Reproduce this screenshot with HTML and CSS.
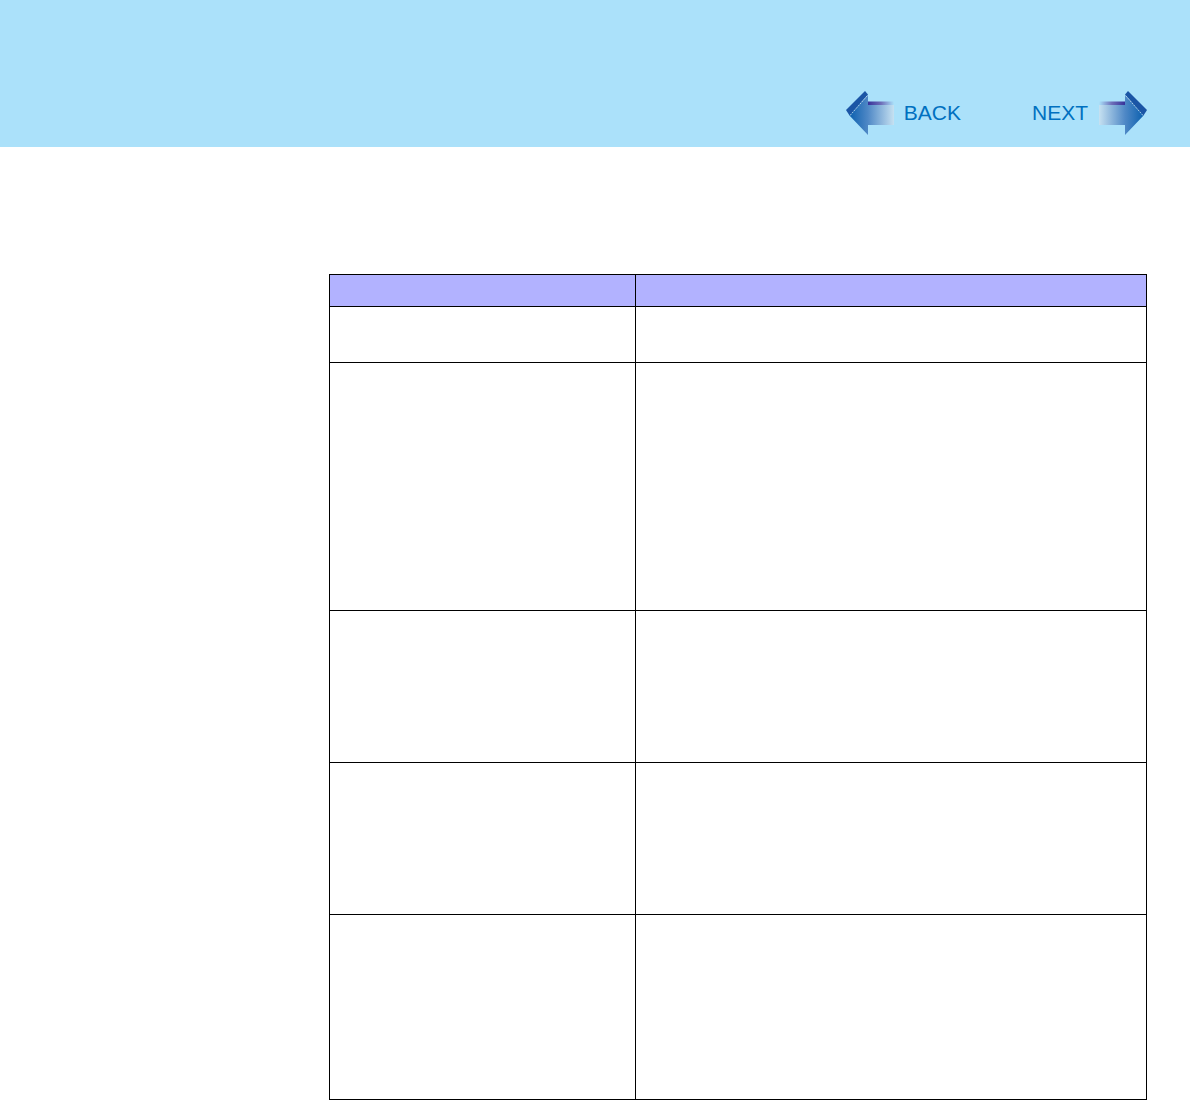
FILE: index.html
```html
<!DOCTYPE html>
<html lang="en">
<head>
<meta charset="utf-8">
<title>Manual page</title>
<link rel="stylesheet" href="styles.css">
</head>
<body>
<header class="banner">
  <nav class="pager">
    <a class="pager-link back" href="#">
      <svg class="arrow" width="50" height="46" viewBox="0 0 50 46">
        <defs>
          <linearGradient id="bk" gradientUnits="userSpaceOnUse" x1="4" x2="49" y1="0" y2="0">
            <stop offset="0" stop-color="#0a5fae"/>
            <stop offset="0.42" stop-color="#4f88c6"/>
            <stop offset="1" stop-color="#c6e1f1"/>
          </linearGradient>
          <linearGradient id="bks" x1="0" x2="1" y1="0" y2="0">
            <stop offset="0" stop-color="#37329a"/>
            <stop offset="0.5" stop-color="#6d6db8"/>
            <stop offset="1" stop-color="#abe1fa"/>
          </linearGradient>
        </defs>
        <path fill="url(#bk)" d="M4 25 L23 5 L23 15 L49 15 L49 35 L23 35 L23 45 Z"/>
        <rect fill="url(#bks)" x="23" y="11.5" width="26" height="3.5"/>
        <path fill="#1b55a5" d="M1 20 L20 1 L23 4.5 L4.5 25.5 Z"/>
        <path fill="none" stroke="#cfe6f2" stroke-width="0.8" stroke-dasharray="2 1" d="M5 25.5 L23 5"/>
      </svg>
      <span>BACK</span>
    </a>
    <a class="pager-link next" href="#">
      <span>NEXT</span>
      <svg class="arrow" width="50" height="46" viewBox="0 0 50 46">
        <defs>
          <linearGradient id="nx" gradientUnits="userSpaceOnUse" x1="46" x2="1" y1="0" y2="0">
            <stop offset="0" stop-color="#0a5fae"/>
            <stop offset="0.42" stop-color="#4f88c6"/>
            <stop offset="1" stop-color="#c6e1f1"/>
          </linearGradient>
          <linearGradient id="nxs" x1="1" x2="0" y1="0" y2="0">
            <stop offset="0" stop-color="#37329a"/>
            <stop offset="0.5" stop-color="#6d6db8"/>
            <stop offset="1" stop-color="#abe1fa"/>
          </linearGradient>
        </defs>
        <path fill="url(#nx)" d="M46 25 L27 5 L27 15 L1 15 L1 35 L27 35 L27 45 Z"/>
        <rect fill="url(#nxs)" x="1" y="11.5" width="26" height="3.5"/>
        <path fill="#1b55a5" d="M49 20 L30 1 L27 4.5 L45.5 25.5 Z"/>
        <path fill="none" stroke="#cfe6f2" stroke-width="0.8" stroke-dasharray="2 1" d="M45 25.5 L27 5"/>
      </svg>
    </a>
  </nav>
</header>
<main class="content">
  <table class="grid">
    <colgroup><col class="col-a"><col class="col-b"></colgroup>
    <tr class="head r-head"><th></th><th></th></tr>
    <tr class="r1"><td></td><td></td></tr>
    <tr class="r2"><td></td><td></td></tr>
    <tr class="r3"><td></td><td></td></tr>
    <tr class="r3"><td></td><td></td></tr>
    <tr class="r4"><td></td><td></td></tr>
  </table>
</main>
</body>
</html>
```

FILE: styles.css
```css
html, body {
  margin: 0;
  padding: 0;
  background: #fff;
  font-family: "Liberation Sans", Arial, sans-serif;
}
.banner {
  height: 147px;
  background: #abe1fa;
  display: flex;
  align-items: flex-end;
  justify-content: flex-end;
}
.pager {
  display: flex;
  gap: 71px;
  padding: 0 42px 11px 0;
}
.pager-link {
  display: flex;
  align-items: center;
  gap: 10px;
  color: #0070c0;
  font-size: 21px;
  text-decoration: none;
}
.back { gap: 9px; }
.arrow { display: block; }
.content {
  padding: 127px 43px 0 329px;
}
.grid {
  border-collapse: collapse;
  table-layout: fixed;
  width: 818px;
}
.col-a { width: 306px; }
.grid th, .grid td {
  border: 1px solid #000;
  padding: 0;
}
.head th { background: #b2b2ff; }
.r-head { height: 32px; }
.r1 { height: 56px; }
.r2 { height: 248px; }
.r3 { height: 152px; }
.r4 { height: 185px; }
```
